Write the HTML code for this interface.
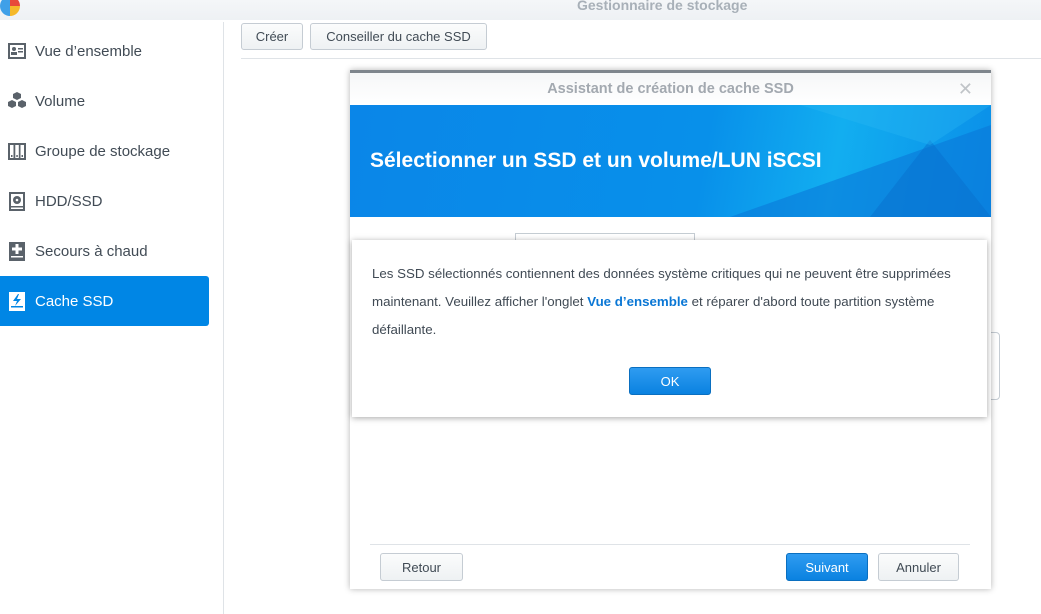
<!DOCTYPE html>
<html><head><meta charset="utf-8"><style>
*{margin:0;padding:0;box-sizing:border-box}
body{width:1041px;height:614px;overflow:hidden;background:#fff;font-family:"Liberation Sans",sans-serif;position:relative;color:#404040}
.a{position:absolute}
.top{left:0;top:0;width:1041px;height:20px;background:linear-gradient(#f4f6f8,#eef1f4)}
.nav{left:0;width:209px;height:50px;font-size:15px;display:flex;align-items:center;padding-left:35px;color:#414b55}
.ic{position:absolute;left:7px;top:15px;width:20px;height:20px}
.btn{border:1px solid #c5ccd3;background:linear-gradient(#fbfcfc,#eef1f3);border-radius:3px;font-size:13px;color:#414b55;display:flex;align-items:center;justify-content:center}
.bb{background:linear-gradient(#2f9cf1,#0a82e0);border:1px solid #0a6fc0;color:#fff}
</style></head><body>
<div class="a top"></div>
<div class="a" style="left:0;top:-4px;width:20px;height:20px;border-radius:50%;background:conic-gradient(#e84a3a 0 25%,#f5b92a 0 50%,#3fa0e8 0)"></div>
<div class="a" style="left:577px;top:-3px;font-size:14px;font-weight:bold;color:#a8b0b8">Gestionnaire de stockage</div>
<div class="a" style="left:223px;top:22px;width:1px;height:592px;background:#dfe3e7"></div>

<div class="a nav" style="top:26px"><svg class="ic" viewBox="0 0 20 20"><rect x="1" y="2" width="18" height="16" fill="#5a626a"/><rect x="3" y="4" width="14" height="12" fill="#fff"/><circle cx="7" cy="8" r="2" fill="#5a626a"/><rect x="4" y="11" width="6" height="3" fill="#5a626a"/><rect x="11" y="7" width="5" height="1.5" fill="#5a626a"/><rect x="11" y="10" width="5" height="1.5" fill="#5a626a"/></svg>Vue d’ensemble</div>
<div class="a nav" style="top:76px"><svg class="ic" viewBox="0 0 20 20" fill="#5a626a"><path d="M10 1l4 2v4l-4 2-4-2V3zM5 9l4 2v4l-4 2-4-2v-4zM15 9l4 2v4l-4 2-4-2v-4z"/></svg>Volume</div>
<div class="a nav" style="top:126px"><svg class="ic" viewBox="0 0 20 20"><rect x="1" y="2" width="18" height="17" fill="#5a626a"/><rect x="3" y="4" width="3.5" height="13" fill="#fff"/><rect x="8.3" y="4" width="3.5" height="13" fill="#fff"/><rect x="13.5" y="4" width="3.5" height="13" fill="#fff"/><rect x="4" y="14" width="1.5" height="2" fill="#5a626a"/><rect x="9.3" y="14" width="1.5" height="2" fill="#5a626a"/><rect x="14.5" y="14" width="1.5" height="2" fill="#5a626a"/></svg>Groupe de stockage</div>
<div class="a nav" style="top:176px"><svg class="ic" viewBox="0 0 20 20"><rect x="2" y="1" width="16" height="19" fill="#5a626a"/><rect x="4" y="3" width="12" height="15" fill="#fff"/><circle cx="10" cy="9" r="4" fill="#5a626a"/><circle cx="10" cy="9" r="1.3" fill="#fff"/><rect x="4" y="15" width="12" height="1.5" fill="#5a626a"/></svg>HDD/SSD</div>
<div class="a nav" style="top:226px"><svg class="ic" viewBox="0 0 20 20"><rect x="2" y="1" width="16" height="19" fill="#5a626a"/><rect x="8.5" y="3" width="3" height="10" fill="#fff"/><rect x="5" y="6.5" width="10" height="3" fill="#fff"/><rect x="4" y="15" width="12" height="1.5" fill="#fff"/></svg>Secours à chaud</div>
<div class="a nav" style="top:276px;background:#0086e5;color:#fff;border-radius:0 3px 3px 0"><svg class="ic" viewBox="0 0 20 20"><rect x="2" y="1" width="16" height="19" fill="#fff"/><path d="M11 3L6 10h4l-2 5 6-7h-4l2-5z" fill="#0086e5"/><rect x="4" y="15" width="12" height="1.5" fill="#0086e5"/></svg>Cache SSD</div>

<div class="a btn" style="left:241px;top:23px;width:62px;height:27px">Créer</div>
<div class="a btn" style="left:310px;top:23px;width:177px;height:27px">Conseiller du cache SSD</div>
<div class="a" style="left:241px;top:58px;width:800px;height:1px;background:#dfe3e7"></div>

<div class="a" style="left:990px;top:332px;width:10px;height:68px;border:1px solid #c5ccd3;border-radius:0 4px 4px 0;background:#fff"></div>

<div class="a" style="left:350px;top:70px;width:641px;height:519px;background:#fff;border-top:3px solid #7f868d;box-shadow:0 0 6px rgba(0,0,0,.3)">
 <div class="a" style="left:0;top:0;width:641px;height:32px;background:linear-gradient(#f6f7f8,#fff);text-align:center;line-height:32px;font-size:14.5px;font-weight:bold;color:#a3a9b0">Assistant de création de cache SSD</div>
 <div class="a" style="right:18px;top:7px;font-size:18px;color:#c0c4c8;line-height:18px">✕</div>
 <div class="a" style="left:0;top:32px;width:641px;height:112px;background:linear-gradient(100deg,#0a86e8 0%,#0890ea 55%,#12aef0 75%,#0a8ee8 100%);overflow:hidden">
  <svg class="a" style="left:0;top:0" width="641" height="112"><polygon points="380,112 641,20 641,112" fill="#0a78d8" opacity=".6"/><polygon points="520,112 580,35 641,112" fill="#086fcd" opacity=".5"/><polygon points="450,0 641,0 580,40" fill="#2ab8f4" opacity=".35"/></svg>
  <div class="a" style="left:20px;top:44px;font-size:21px;font-weight:bold;color:#fff">Sélectionner un SSD et un volume/LUN iSCSI</div>
 </div>
 <div class="a" style="left:165px;top:160px;width:180px;height:20px;border:1px solid #c5ccd3"></div>
 <div class="a" style="left:20px;top:471px;width:600px;height:1px;background:#dfe3e7"></div>
 <div class="a btn" style="left:30px;top:480px;width:83px;height:28px">Retour</div>
 <div class="a btn bb" style="left:436px;top:480px;width:82px;height:28px">Suivant</div>
 <div class="a btn" style="left:528px;top:480px;width:81px;height:28px">Annuler</div>
</div>

<div class="a" style="left:352px;top:240px;width:635px;height:177px;background:#fff;box-shadow:0 1px 6px rgba(0,0,0,.35)">
 <div class="a" style="left:20px;top:20px;width:600px;font-size:13.3px;line-height:28px;color:#404a54">Les SSD sélectionnés contiennent des données système critiques qui ne peuvent être supprimées maintenant. Veuillez afficher l'onglet <b style="color:#0a77d5">Vue d’ensemble</b> et réparer d'abord toute partition système défaillante.</div>
 <div class="a btn bb" style="left:277px;top:127px;width:82px;height:28px">OK</div>
</div>
</body></html>
